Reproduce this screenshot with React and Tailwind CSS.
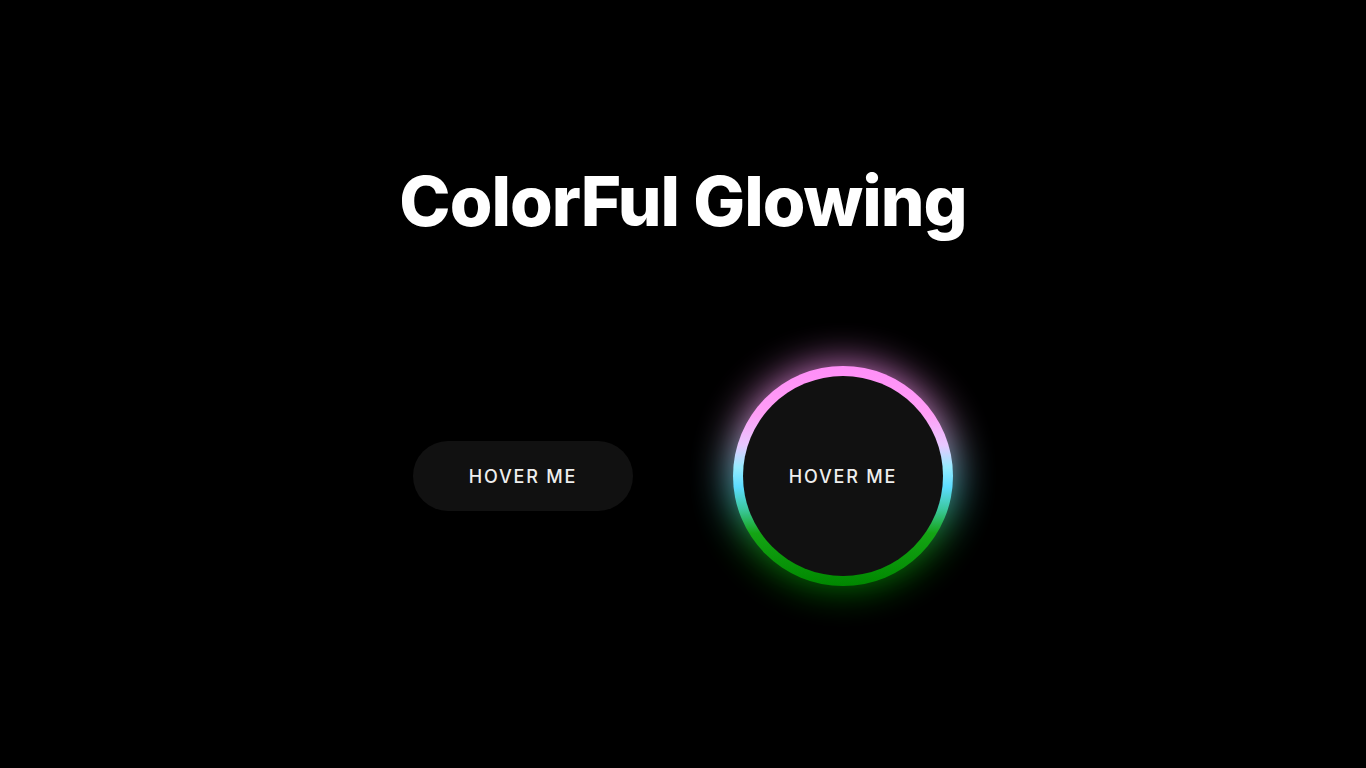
export default function App() {
  const ring =
    "bg-[linear-gradient(180deg,#ff8ef8_0%,#ff9ef6_22%,#e8c8ff_36%,#96ecff_46%,#5ddcff_55%,#3cc8a0_65%,#14a414_76%,#008800_100%)]";
  return (
    <div className="min-h-[768px] w-full bg-black flex flex-col items-center font-['Inter',sans-serif]">
      <h1 className="mt-[163px] text-white font-extrabold text-[69px] leading-[76px] tracking-[-1px]">
        ColorFul Glowing
      </h1>
      <div className="mt-[127px] flex items-center gap-[100px]">
        <button className="w-[220px] h-[70px] rounded-full bg-[#111111] text-[#eeeeee] text-[18px] font-medium tracking-[1.8px]">
          HOVER ME
        </button>
        <div className="relative w-[220px] h-[220px]">
          <div className={`absolute inset-0 rounded-full blur-[20px] opacity-90 ${ring}`} />
          <div className={`relative w-[220px] h-[220px] rounded-full p-[10px] ${ring}`}>
            <div className="w-full h-full rounded-full bg-[#111111] flex items-center justify-center text-[#eeeeee] text-[18px] font-medium tracking-[1.8px]">
              HOVER ME
            </div>
          </div>
        </div>
      </div>
    </div>
  );
}
